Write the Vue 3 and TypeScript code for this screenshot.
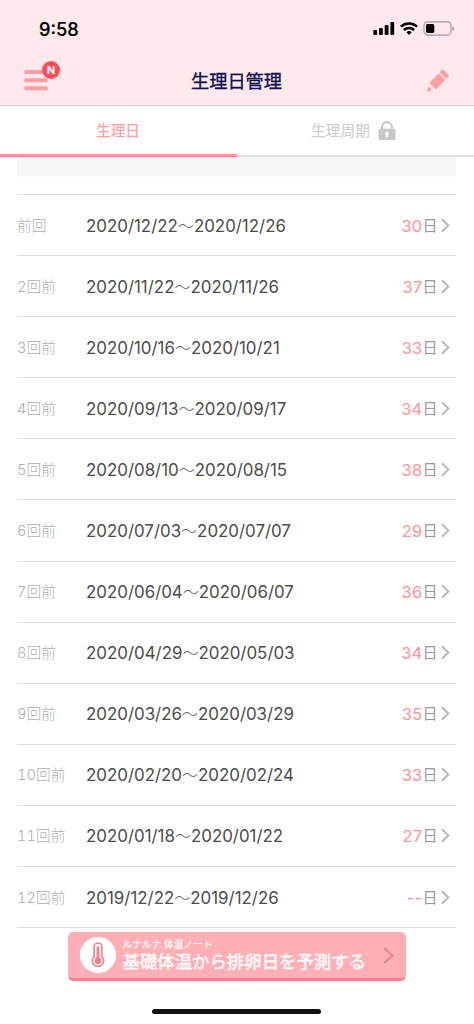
<script setup lang="ts">
interface Cycle {
  label: string
  start: string
  end: string
  days: string
}

const cycles: Cycle[] = [
  { label: '前回', start: '2020/12/22', end: '2020/12/26', days: '30' },
  { label: '2回前', start: '2020/11/22', end: '2020/11/26', days: '37' },
  { label: '3回前', start: '2020/10/16', end: '2020/10/21', days: '33' },
  { label: '4回前', start: '2020/09/13', end: '2020/09/17', days: '34' },
  { label: '5回前', start: '2020/08/10', end: '2020/08/15', days: '38' },
  { label: '6回前', start: '2020/07/03', end: '2020/07/07', days: '29' },
  { label: '7回前', start: '2020/06/04', end: '2020/06/07', days: '36' },
  { label: '8回前', start: '2020/04/29', end: '2020/05/03', days: '34' },
  { label: '9回前', start: '2020/03/26', end: '2020/03/29', days: '35' },
  { label: '10回前', start: '2020/02/20', end: '2020/02/24', days: '33' },
  { label: '11回前', start: '2020/01/18', end: '2020/01/22', days: '27' },
  { label: '12回前', start: '2019/12/22', end: '2019/12/26', days: '--' },
]
</script>

<template>
  <div class="screen">
    <header class="header">
      <div class="status">
        <span class="clock">9:58</span>
        <svg class="status-icons" width="82" height="16" viewBox="0 0 82 16">
          <rect x="0.3" y="9" width="3.8" height="5" rx="1" />
          <rect x="6" y="7" width="3.8" height="7" rx="1" />
          <rect x="11.7" y="4" width="3.8" height="10" rx="1" />
          <rect x="17.4" y="1" width="3.8" height="13" rx="1" />
          <g fill="none" stroke="#000" stroke-width="2.5">
            <path d="M27.9 5.6a12 12 0 0 1 16.2 0" />
            <path d="M30.8 9a7.7 7.7 0 0 1 10.4 0" />
          </g>
          <path d="M36 14l-2.6-2.7a3.8 3.8 0 0 1 5.2 0z" />
          <rect x="51" y="0.9" width="27" height="13.2" rx="3.8" fill="none" stroke="#a39598" stroke-width="1.1" />
          <rect x="53" y="2.9" width="8.3" height="9.2" rx="1.6" />
          <path d="M79.5 5.2v4.6c1.8-.7 1.8-3.9 0-4.6z" fill="#8f8386" />
        </svg>
      </div>
      <div class="nav">
        <button class="menu" aria-label="メニュー">
          <svg width="24" height="21" viewBox="0 0 24 21">
            <path d="M2 2h20M2 10.2h20M2 18.3h20" stroke="#ff9da4" stroke-width="4" stroke-linecap="round" />
          </svg>
          <span class="badge">N</span>
        </button>
        <h1 class="title">生理日管理</h1>
        <svg class="pencil" width="24" height="24" viewBox="0 0 24 24" fill="#ff9da4">
          <path d="M15.8 1.1q.8-.8 1.6 0l5.1 5q.8.8 0 1.6l-2.2 2.2-6.7-6.6z" />
          <path d="M12.5 4.4l6.8 6.6-9.1 9.3-7-6.4z" />
          <path d="M2.2 17.2l4 3.8-4.1 1.7q-1.2.3-.9-.9z" />
        </svg>
      </div>
    </header>

    <nav class="tabs">
      <div class="tab active">生理日</div>
      <div class="tab locked">
        <span>生理周期</span>
        <svg width="18" height="20" viewBox="0 0 18 20">
          <path d="M4 9V6.2a5 5 0 0 1 10 0V9" fill="none" stroke="#c9c9c9" stroke-width="2.2" />
          <rect x="0.5" y="7.8" width="17" height="11.2" rx="1.4" fill="#c9c9c9" />
          <path d="M9 10.6a1.9 1.9 0 0 1 1 3.4v2.2H8V14a1.9 1.9 0 0 1 1-3.4z" fill="#fff" />
        </svg>
      </div>
    </nav>

    <main class="content">
      <div class="strip"></div>
      <ul class="list">
        <li v-for="c in cycles" :key="c.label" class="row">
          <span class="label">{{ c.label }}</span>
          <span class="period">{{ c.start }}<span class="wave">〜</span>{{ c.end }}</span>
          <span class="days">{{ c.days }}</span>
          <span class="unit">日</span>
          <svg class="chevron" width="9" height="15" viewBox="0 0 9 15">
            <path d="M1 1.2l6.3 6.3L1 13.8" />
          </svg>
        </li>
      </ul>
      <a class="banner">
        <span class="disc">
          <svg width="14" height="26" viewBox="0 0 14 26" fill="none">
            <path d="M3.1 14.6V4.9a3.9 3.9 0 0 1 7.8 0v9.7a5.7 5.7 0 1 1-7.8 0z" stroke="#ef858c" stroke-width="1.7" />
            <path d="M7 5.8V18" stroke="#ef858c" stroke-width="3" stroke-linecap="round" />
            <circle cx="7" cy="18.7" r="3.4" fill="#ef858c" />
          </svg>
        </span>
        <span class="copy">
          <span class="small">ルナルナ 体温ノート</span>
          <span class="big">基礎体温から排卵日を予測する</span>
        </span>
        <svg class="arrow" width="12" height="17" viewBox="0 0 12 17">
          <path d="M1.2 1.2l8.3 7.3-8.3 7.3" fill="none" stroke="#ef858c" stroke-width="2.3" />
        </svg>
      </a>
    </main>
    <div class="home"></div>
  </div>
</template>

<style>
body {
  margin: 0;
  background: #fff;
}
</style>

<style scoped>
.screen {
  box-sizing: border-box;
  width: 474px;
  height: 1024px;
  display: flex;
  flex-direction: column;
  overflow: hidden;
  background: #fff;
  font-family: Inter, "Noto Sans CJK JP", sans-serif;
}
.header {
  box-sizing: border-box;
  height: 106px;
  background: #ffe9ed;
  border-bottom: 1px solid #d6cfd0;
}
.status {
  height: 55px;
  display: flex;
  align-items: center;
  justify-content: space-between;
  padding: 0 19px 0 39px;
}
.clock {
  font-size: 18.2px;
  font-weight: 500;
  line-height: 24px;
  margin-top: 2px;
  -webkit-text-stroke: 0.2px #000;
}
.status-icons {
  margin-top: 2px;
}
.nav {
  height: 50px;
  display: grid;
  grid-template-columns: 80px 1fr 80px;
  align-items: center;
}
.menu {
  position: relative;
  width: 24px;
  height: 21px;
  margin: 1px 0 0 24px;
  padding: 0;
  border: 0;
  background: none;
}
.menu svg {
  display: block;
}
.badge {
  position: absolute;
  left: 18px;
  top: -9px;
  width: 18px;
  height: 18px;
  border-radius: 50%;
  background: #fd4d5c;
  color: #fff;
  font: 700 11px/18px Inter, sans-serif;
  text-align: center;
}
.title {
  margin: 1px 0 0 -1px;
  text-align: center;
  font-size: 18.2px;
  line-height: 26px;
  font-weight: 400;
  color: #10104f;
  -webkit-text-stroke: 0.35px #10104f;
}
.pencil {
  margin: 1px 0 0 32px;
}
.tabs {
  height: 51px;
  display: grid;
  grid-template-columns: 237px 237px;
}
.tab {
  box-sizing: border-box;
  display: flex;
  align-items: center;
  justify-content: center;
  font-size: 14.7px;
  line-height: 20px;
  border-bottom: 2px solid #e2e2e2;
}
.tab.active {
  color: #ff9da4;
  padding: 2px 1px 0 0;
  border-bottom: 3px solid #ff9299;
  -webkit-text-stroke: 0.2px #ff9da4;
}
.locked {
  color: #d0d0d0;
  gap: 8px;
  padding: 1px 4px 0 0;
  -webkit-text-stroke: 0.2px #d0d0d0;
}
.locked svg {
  margin-top: -1px;
}
.content {
  margin: 0 18px 0 17px;
}
.strip {
  height: 20px;
  background: #f7f7f7;
}
.list {
  list-style: none;
  margin: 17px 0 0;
  padding: 0;
  border-top: 1px solid #dedede;
}
.row {
  box-sizing: border-box;
  height: 61.1px;
  display: flex;
  align-items: center;
  padding: 1px 6px 0 0;
  border-bottom: 1px solid #dedede;
}
.label {
  width: 69px;
  font-size: 14.7px;
  line-height: 22px;
  font-weight: 300;
  font-variant-numeric: tabular-nums;
  color: #b0b0b0;
}
.period {
  flex: 1;
  font-size: 16.9px;
  line-height: 24px;
  color: #4c4c4c;
  white-space: nowrap;
}
.wave {
  font-family: "Noto Sans CJK JP", sans-serif;
  font-size: 16px;
  line-height: 1;
  font-weight: 300;
  color: #6a6a6a;
}
.days {
  font-size: 16.4px;
  line-height: 24px;
  letter-spacing: 0.3px;
  color: #ff9299;
}
.unit {
  font-size: 15px;
  line-height: 22px;
  color: #9a9a9a;
}
.chevron {
  margin: -1px 0 0 3.5px;
}
.chevron path {
  fill: none;
  stroke: #bababa;
  stroke-width: 2;
}
.banner {
  box-sizing: border-box;
  width: 338px;
  height: 49px;
  margin: 3.8px 0 0 51px;
  padding: 0 11px 0 12px;
  display: flex;
  align-items: center;
  border-radius: 5px;
  border-bottom: 3px solid #f0858c;
  background: #ffb0b6;
  color: #fff;
}
.disc {
  width: 36px;
  height: 36px;
  display: flex;
  align-items: center;
  justify-content: center;
  border-radius: 50%;
  background: #fff;
}
.copy {
  display: flex;
  flex-direction: column;
  flex: 1;
  margin: 2px 0 0 6.5px;
  white-space: nowrap;
}
.small {
  font-size: 9.7px;
  line-height: 13px;
  -webkit-text-stroke: 0.2px #fff;
}
.big {
  font-size: 17.4px;
  line-height: 22px;
  -webkit-text-stroke: 0.4px #fff;
}
.arrow {
  margin-top: 1px;
}
.home {
  width: 169px;
  height: 5px;
  margin: 28px 0 0 152px;
  border-radius: 3px;
  background: #111;
}
</style>
